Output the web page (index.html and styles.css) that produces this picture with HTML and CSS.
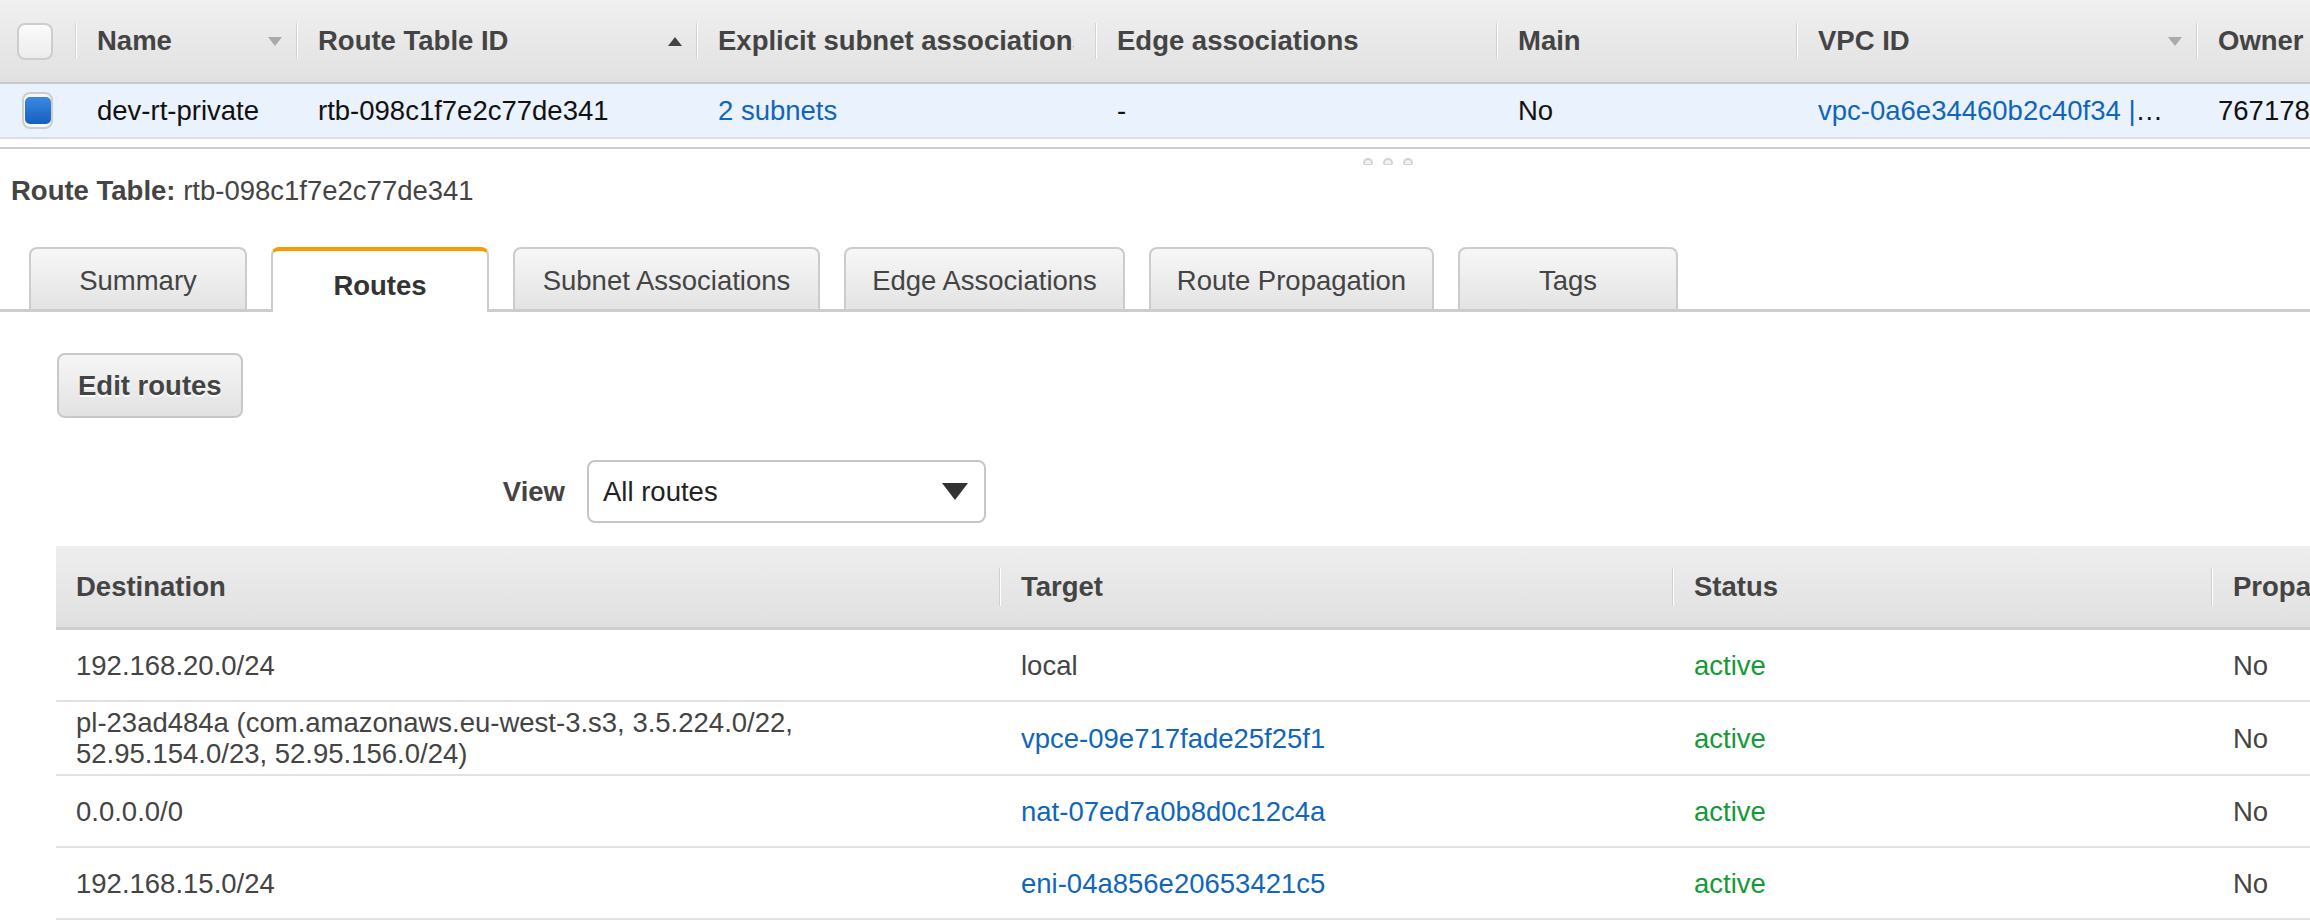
FILE: index.html
```html
<!DOCTYPE html>
<html lang="en">
<head>
<meta charset="utf-8">
<title>Route Tables</title>
<link rel="stylesheet" href="styles.css">
</head>
<body>
<div class="page">
  <div class="list-pane">
    <div class="top-table">
      <div class="th th-check"><span class="cb"></span></div>
      <div class="th sep"><span class="lbl">Name</span><span class="sort sort-down"></span></div>
      <div class="th sep"><span class="lbl">Route Table ID</span><span class="sort sort-up"></span></div>
      <div class="th sep"><span class="lbl clip">Explicit subnet associations</span></div>
      <div class="th sep"><span class="lbl">Edge associations</span></div>
      <div class="th sep"><span class="lbl">Main</span></div>
      <div class="th sep"><span class="lbl">VPC ID</span><span class="sort sort-down"></span></div>
      <div class="th sep"><span class="lbl">Owner</span></div>

      <div class="td td-check"><span class="cb cb-on"><span class="cb-fill"></span></span></div>
      <div class="td">dev-rt-private</div>
      <div class="td">rtb-098c1f7e2c77de341</div>
      <div class="td"><a class="link" href="#">2 subnets</a></div>
      <div class="td">-</div>
      <div class="td">No</div>
      <div class="td td-ellipsis"><a class="link" href="#">vpc-0a6e34460b2c40f34 | dev-vpc</a></div>
      <div class="td">767178</div>
    </div>
    <div class="pane-end"></div>
  </div>

  <div class="splitter"><span class="dot"></span><span class="dot"></span><span class="dot"></span></div>

  <div class="details">
    <div class="rt-title"><b>Route Table:</b> rtb-098c1f7e2c77de341</div>

    <div class="tabs">
      <div class="tab tab-summary">Summary</div>
      <div class="tab tab-active">Routes</div>
      <div class="tab tab-subnets">Subnet Associations</div>
      <div class="tab tab-edge">Edge Associations</div>
      <div class="tab tab-prop">Route Propagation</div>
      <div class="tab tab-tags">Tags</div>
    </div>

    <div class="tab-body">
      <button class="btn" type="button">Edit routes</button>

      <div class="view-row">
        <span class="view-label">View</span>
        <div class="select"><span>All routes</span><span class="caret"></span></div>
      </div>

      <div class="routes">
        <div class="rh">Destination</div>
        <div class="rh sep2">Target</div>
        <div class="rh sep2">Status</div>
        <div class="rh sep2">Propagated</div>

        <div class="rd">192.168.20.0/24</div>
        <div class="rd">local</div>
        <div class="rd ok">active</div>
        <div class="rd">No</div>

        <div class="rd">pl-23ad484a (com.amazonaws.eu-west-3.s3, 3.5.224.0/22, 52.95.154.0/23, 52.95.156.0/24)</div>
        <div class="rd"><a class="link" href="#">vpce-09e717fade25f25f1</a></div>
        <div class="rd ok">active</div>
        <div class="rd">No</div>

        <div class="rd">0.0.0.0/0</div>
        <div class="rd"><a class="link" href="#">nat-07ed7a0b8d0c12c4a</a></div>
        <div class="rd ok">active</div>
        <div class="rd">No</div>

        <div class="rd">192.168.15.0/24</div>
        <div class="rd"><a class="link" href="#">eni-04a856e20653421c5</a></div>
        <div class="rd ok">active</div>
        <div class="rd">No</div>
      </div>
    </div>
  </div>
</div>
</body>
</html>
```

FILE: styles.css
```css
html, body {
  margin: 0;
  padding: 0;
  background: #fff;
}
body {
  font-family: "Liberation Sans", Arial, Helvetica, sans-serif;
  font-size: 27.5px;
  color: #444;
  width: 2310px;
  height: 924px;
  overflow: hidden;
}
.page {
  width: 2310px;
  overflow: hidden;
}

/* ---------- top list table ---------- */
.top-table {
  display: grid;
  grid-template-columns: 75px 221px 400px 399px 401px 300px 400px 300px;
  width: max-content;
}
.th {
  position: relative;
  height: 82px;
  display: flex;
  align-items: center;
  padding: 0 14px 0 22px;
  background: linear-gradient(#f0f0f0, #e1e1e1);
  border-bottom: 2px solid #c9c9c9;
  font-weight: bold;
  color: #444;
  white-space: nowrap;
  overflow: hidden;
}
.th.sep::before {
  content: "";
  position: absolute;
  left: 0;
  top: 23px;
  height: 36px;
  width: 1px;
  background: #d3d3d3;
  box-shadow: 1px 0 0 #fff;
}
.th-check, .td-check {
  padding: 0 0 0 17px;
}
.lbl {
  flex: 1 1 auto;
  overflow: hidden;
}
.lbl.clip {
  margin-right: 7px;
}
.sort {
  flex: 0 0 auto;
  width: 0;
  height: 0;
  border-left: 7px solid transparent;
  border-right: 7px solid transparent;
}
.sort-down {
  border-top: 9px solid #aaa;
}
.sort-up {
  border-bottom: 9px solid #444;
}
.cb {
  box-sizing: border-box;
  width: 36px;
  height: 37px;
  border: 2px solid #cdcdcd;
  border-radius: 8px;
  background: linear-gradient(#fbfbfb, #ececec);
  display: flex;
  align-items: center;
  justify-content: center;
}
.cb-on {
  background: #f6f6f6;
}
.cb-fill {
  width: 26px;
  height: 27px;
  border-radius: 5px;
  background: linear-gradient(#3b8ae0, #1460bd);
}
.td {
  height: 53px;
  display: flex;
  align-items: center;
  padding: 0 22px;
  background: #eaf2fd;
  border-bottom: 2px solid #dadde2;
  color: #111;
  white-space: nowrap;
  overflow: hidden;
}
.td-ellipsis {
  display: block;
  line-height: 53px;
  text-overflow: ellipsis;
  padding-right: 31px;
}
.link {
  color: #1166bb;
  text-decoration: none;
}
.pane-end {
  height: 8px;
  border-bottom: 2px solid #cbcbcb;
}

/* ---------- splitter ---------- */
.splitter {
  height: 13px;
  padding-top: 9px;
  display: flex;
  gap: 10px;
  margin-left: 1363px;
}
.dot {
  box-sizing: border-box;
  width: 10px;
  height: 7px;
  border: 2px solid #d2d2d2;
  border-bottom-width: 1px;
  border-radius: 5px 5px 2px 2px;
  background: #f4f4f4;
}

/* ---------- details ---------- */
.rt-title {
  margin: 4px 0 0 11px;
  line-height: 32px;
  color: #444;
}
.rt-title b {
  color: #444;
}
.tabs {
  margin-top: 40px;
  display: flex;
  gap: 24px;
  padding-left: 29px;
  border-bottom: 3px solid #cccccc;
  height: 62px;
}
.tab {
  box-sizing: border-box;
  height: 62px;
  padding: 4px 0 0;
  display: flex;
  align-items: center;
  justify-content: center;
  border: 2px solid #cccccc;
  border-bottom: none;
  border-radius: 8px 8px 0 0;
  background: linear-gradient(#f7f7f7, #e3e3e3);
  color: #444;
  white-space: nowrap;
}
.tab-summary { width: 218px; }
.tab-active { width: 218px; }
.tab-subnets { width: 307px; }
.tab-edge { width: 281px; }
.tab-prop { width: 285px; }
.tab-tags { width: 220px; }
.tab-active {
  height: 65px;
  background: #fff;
  border-top: 4px solid #ff9900;
  font-weight: bold;
  color: #333;
  padding-top: 8px;
}

.tab-body {
  padding-top: 41px;
}
.btn {
  display: block;
  margin-left: 57px;
  box-sizing: border-box;
  height: 65px;
  padding: 0 19px;
  border: 2px solid #c8c8c8;
  border-radius: 8px;
  background: linear-gradient(#f6f6f6, #e2e2e2);
  font-family: inherit;
  font-size: 27.5px;
  font-weight: bold;
  color: #444;
  text-shadow: 0 2px 0 #fff;
}

.view-row {
  margin: 42px 0 0 57px;
  display: flex;
  align-items: center;
  gap: 22px;
}
.view-label {
  width: 508px;
  text-align: right;
  font-weight: bold;
  color: #444;
}
.select {
  box-sizing: border-box;
  width: 399px;
  height: 63px;
  border: 2px solid #c6c6c6;
  border-radius: 8px;
  padding: 0 16px 0 14px;
  display: flex;
  align-items: center;
  justify-content: space-between;
  color: #222;
  background: #fff;
}
.caret {
  width: 0;
  height: 0;
  border-left: 13px solid transparent;
  border-right: 13px solid transparent;
  border-top: 17px solid #333;
}

/* ---------- routes table ---------- */
.routes {
  margin: 23px 0 0 56px;
  display: grid;
  grid-template-columns: 943px 673px 539px 400px;
  width: max-content;
}
.rh {
  position: relative;
  box-sizing: border-box;
  height: 84px;
  padding: 0 21px 0 20px;
  display: flex;
  align-items: center;
  background: linear-gradient(#eeeeee, #e0e0e0);
  border-bottom: 3px solid #cfcfcf;
  font-weight: bold;
  color: #444;
  white-space: nowrap;
}
.rh.sep2 {
  padding-left: 22px;
}
.rh.sep2::before {
  content: "";
  position: absolute;
  left: 0;
  top: 22px;
  height: 38px;
  width: 1px;
  background: #d0d0d0;
  box-shadow: 1px 0 0 #fff;
}
.rd {
  box-sizing: border-box;
  min-height: 72px;
  padding: 5px 40px 5px 20px;
  display: flex;
  align-items: center;
  line-height: 31px;
  border-bottom: 2px solid #e2e2e2;
  color: #444;
}
.rd:nth-child(4n+2), .rd:nth-child(4n+3), .rd:nth-child(4n) {
  padding-left: 22px;
}
.ok {
  color: #149a36;
}
```
